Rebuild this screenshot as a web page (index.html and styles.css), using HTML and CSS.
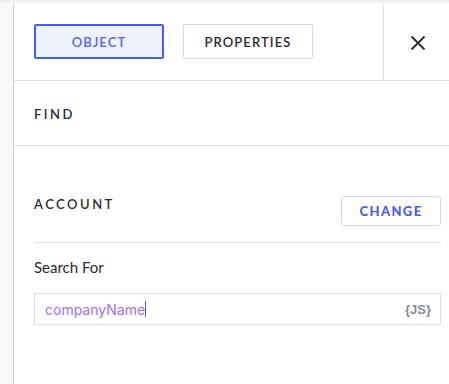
FILE: index.html
```html
<!DOCTYPE html>
<html>
<head>
<meta charset="utf-8">
<link rel="stylesheet" href="styles.css">
</head>
<body>
<div class="app">
  <div class="rail"></div>
  <div class="panel">
    <div class="header">
      <div class="tabs">
        <button class="tab tab-active">OBJECT</button>
        <button class="tab">PROPERTIES</button>
      </div>
      <div class="close">
        <svg width="16" height="16" viewBox="0 0 16 16"><path d="M1.5 1.5 L14.5 14.5 M14.5 1.5 L1.5 14.5" stroke="#2b2b33" stroke-width="1.8" fill="none"/></svg>
      </div>
    </div>
    <div class="section find">
      <div class="heading">FIND</div>
    </div>
    <div class="section account">
      <div class="acc-row">
        <div class="heading">ACCOUNT</div>
        <button class="change">CHANGE</button>
      </div>
      <div class="field">
        <label class="label">Search For</label>
        <div class="input">
          <span class="value">companyName<span class="caret"></span></span>
          <span class="js">{JS}</span>
        </div>
      </div>
    </div>
  </div>
</div>
</body>
</html>
```
FILE: styles.css
```css
html, body { margin: 0; padding: 0; background: #fff; }
body { font-family: Lato, "Open Sans", sans-serif; color: #2b2b33; }
.app { display: flex; height: 384px; position: relative; }
.app::before { content: ""; position: absolute; left: 0; right: 0; top: 0; height: 4px; background: linear-gradient(#ececee, #fafafb); }
.rail { width: 13px; background: #f7f8fa; border-right: 1px solid #cdd0d8; flex: none; }
.panel { flex: 1; display: flex; flex-direction: column; padding-top: 4px; }
.header { display: flex; height: 76px; border-bottom: 1px solid #dcdde6; }
.tabs { flex: 1; display: flex; align-items: flex-start; gap: 19px; padding-left: 20px; padding-top: 20px; border-right: 1px solid #dcdde6; }
.tab { width: 130px; height: 35px; box-sizing: border-box; background: #fff; border: 1px solid #d8d9e3; border-radius: 2px; font-family: Lato, sans-serif; font-size: 13px; font-weight: 600; letter-spacing: 1.1px; color: #2b2b33; padding: 0; }
.tab-active { border: 2px solid #4a5cf6; background: #eef2fd; color: #5463f0; font-weight: 600; }
.close { width: 65px; display: flex; align-items: center; justify-content: center; }
.close svg { margin-left: 3px; margin-top: 1px; }
.section { padding: 0 8px 0 20px; }
.find { height: 65px; border-bottom: 1px solid #dcdde6; box-sizing: border-box; display: flex; align-items: center; padding-top: 1px; }
.heading { font-size: 13px; font-weight: 600; letter-spacing: 2.5px; color: #2b2b33; }
.account { padding-top: 50px; }
.acc-row { display: flex; justify-content: space-between; align-items: flex-start; padding-bottom: 16px; border-bottom: 1px solid #dcdde6; }
.acc-row .heading { padding-top: 0px; }
.change { width: 100px; height: 30px; margin-top: 0px; background: #fff; border: 1px solid #d6d7e2; border-radius: 3px; font-family: Lato, sans-serif; font-size: 13px; font-weight: 900; letter-spacing: 1.4px; color: #4a5cf6; padding: 0; }
.field { padding-top: 15px; }
.label { display: block; font-size: 15px; color: #2b2b33; }
.input { margin-top: 17px; height: 32px; box-sizing: border-box; border: 1px solid #dcd9e8; display: flex; align-items: center; justify-content: space-between; padding: 0 9px 0 10px; }
.value { font-family: Inter, "Open Sans", sans-serif; font-size: 14px; color: #a070f0; display: flex; align-items: center; }
.caret { display: inline-block; width: 1px; height: 16px; background: #7050e0; margin-left: 0px; }
.js { font-family: "Liberation Sans", Arial, sans-serif; font-size: 13px; font-weight: 700; color: #8a8a92; }
```
